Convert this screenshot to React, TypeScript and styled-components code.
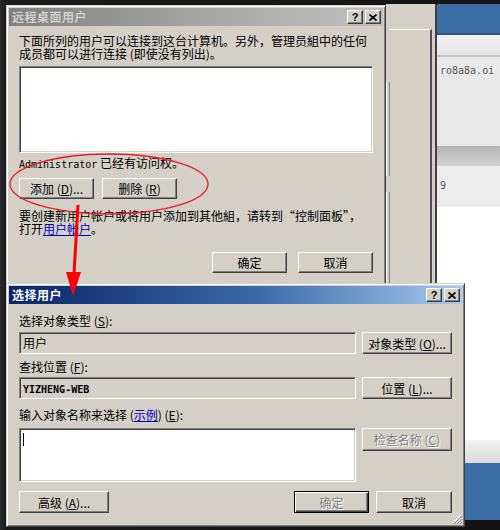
import React from 'react';
import styled, { createGlobalStyle, css } from 'styled-components';

const GlobalStyle = createGlobalStyle`
  html, body {
    margin: 0;
    padding: 0;
    background: #151515;
  }
  body {
    font-family: "Noto Sans CJK SC", "Liberation Sans", sans-serif;
    font-size: 12px;
    color: #000;
  }
`;

const face = '#d4d0c8';

const raised = css`
  border: 1px solid;
  border-color: #fff #404040 #404040 #fff;
  box-shadow: inset -1px -1px #808080;
`;

const sunken = css`
  border: 1px solid;
  border-color: #808080 #fff #fff #808080;
  box-shadow: inset 1px 1px #404040, inset -1px -1px ${face};
`;

const Desktop = styled.div`
  position: relative;
  width: 500px;
  height: 530px;
  overflow: hidden;
  background: linear-gradient(90deg, #2a2a2a 0px, #1a1a1a 6px, #141414 100%);
`;

const Window = styled.div<{ $left: number; $top: number; $width: number; $height: number }>`
  position: absolute;
  left: ${p => p.$left}px;
  top: ${p => p.$top}px;
  width: ${p => p.$width}px;
  height: ${p => p.$height}px;
  box-sizing: border-box;
  background: ${face};
  border: 1px solid;
  border-color: ${face} #404040 #404040 ${face};
  box-shadow: inset 1px 1px #fff, inset -1px -1px #808080;
  padding: 2px;
  display: flex;
  flex-direction: column;
`;

const TitleBar = styled.div<{ $active?: boolean }>`
  height: 18px;
  display: flex;
  align-items: center;
  padding: 0 2px 0 3px;
  background: ${p =>
    p.$active
      ? 'linear-gradient(90deg, #0a246a 0%, #3a6aa8 55%, #a6caf0 100%)'
      : 'linear-gradient(90deg, #808080 0%, #a8a8a8 55%, #c0c0c0 100%)'};
  color: ${p => (p.$active ? '#fff' : '#d4d0c8')};
`;

const TitleText = styled.span`
  flex: 1;
  font-weight: bold;
  font-size: 12px;
  line-height: 18px;
  letter-spacing: 0.5px;
`;

const CaptionButtons = styled.div`
  display: flex;
  gap: 2px;
`;

const CaptionButton = styled.div`
  ${raised};
  box-sizing: border-box;
  width: 16px;
  height: 14px;
  background: ${face};
  color: #000;
  display: flex;
  align-items: center;
  justify-content: center;
  font-family: "Liberation Sans", sans-serif;
  font-weight: bold;
  font-size: 11px;
  line-height: 1;
`;

const CloseGlyph = () => (
  <svg width="8" height="7" viewBox="0 0 8 7">
    <path d="M0.5 0.5 L7.5 6.5 M7.5 0.5 L0.5 6.5" stroke="#000" strokeWidth="1.6" />
  </svg>
);

const Caption = ({ title, active }: { title: string; active?: boolean }) => (
  <TitleBar $active={active}>
    <TitleText>{title}</TitleText>
    <CaptionButtons>
      <CaptionButton>?</CaptionButton>
      <CaptionButton>
        <CloseGlyph />
      </CaptionButton>
    </CaptionButtons>
  </TitleBar>
);

const Body = styled.div<{ $top: number }>`
  padding: ${p => p.$top}px 10px 0 10px;
  display: flex;
  flex-direction: column;
`;

const Text = styled.div<{ $mt?: number }>`
  line-height: 13px;
  margin-top: ${p => p.$mt ?? 0}px;
  white-space: nowrap;
`;

const Mono = styled.span`
  font-family: "DejaVu Sans Mono", "Liberation Mono", monospace;
  font-size: 10px;
`;

const Key = styled.span`
  text-decoration: underline;
`;

const Link = styled.span`
  color: #0000c0;
  text-decoration: underline;
`;

const ListBox = styled.div<{ $w: number; $h: number; $mt?: number; $grey?: boolean }>`
  ${sunken};
  box-sizing: border-box;
  width: ${p => p.$w}px;
  height: ${p => p.$h}px;
  margin-top: ${p => p.$mt ?? 0}px;
  background: ${p => (p.$grey ? face : '#fff')};
  padding: 3px 3px;
  line-height: 13px;
  flex-shrink: 0;
`;

const Caret = styled.div`
  width: 1px;
  height: 13px;
  background: #000;
  margin-top: 1px;
`;

const Button = styled.div<{ $w: number; $h?: number; $disabled?: boolean; $default?: boolean }>`
  ${raised};
  box-sizing: border-box;
  width: ${p => p.$w}px;
  height: ${p => p.$h ?? 21}px;
  background: ${face};
  display: flex;
  align-items: center;
  justify-content: center;
  white-space: nowrap;
  flex-shrink: 0;
  color: ${p => (p.$disabled ? '#808080' : '#000')};
  text-shadow: ${p => (p.$disabled ? '1px 1px #fff' : 'none')};
  ${p =>
    p.$default &&
    css`
      border: 1px solid #000;
      box-shadow: inset 1px 1px #fff, inset -1px -1px #404040, inset -2px -2px #808080;
    `}
`;

const Row = styled.div<{ $mt?: number; $gap: number }>`
  display: flex;
  gap: ${p => p.$gap}px;
  margin-top: ${p => p.$mt ?? 0}px;
`;

const RightRow = styled(Row)`
  justify-content: flex-end;
  width: 354px;
`;

const Spacer = styled.div`
  flex: 1;
`;

const Grip = styled.svg`
  position: absolute;
  right: 2px;
  bottom: 2px;
`;

/* background windows on the right */

const BackPanel = styled.div`
  position: absolute;
  left: 386px;
  top: 4px;
  width: 51px;
  height: 290px;
  box-sizing: border-box;
  background: ${face};
  border-right: 2px solid #404040;
  display: flex;
`;

const BackStrip = styled.div`
  width: 4px;
  margin-top: 78px;
  display: flex;
  flex-direction: column;
  gap: 16px;
`;

const StripPiece = styled.div<{ $h: number }>`
  height: ${p => p.$h}px;
  border-left: 1px solid #fff;
  border-right: 1px solid #808080;
`;

const BackFrame = styled.div`
  width: 40px;
  margin-top: 25px;
  border-top: 1px solid #fff;
  border-right: 2px solid #505050;
`;

const Browser = styled.div`
  position: absolute;
  left: 437px;
  top: 4px;
  width: 63px;
  height: 516px;
  display: flex;
  flex-direction: column;
  border-top-left-radius: 3px;
  overflow: hidden;
  background: #fff;
`;

const Band = styled.div<{ $h: number; $bg: string; $pt?: number }>`
  height: ${p => p.$h}px;
  box-sizing: border-box;
  flex-shrink: 0;
  background: ${p => p.$bg};
  color: #555;
  font-family: "DejaVu Sans Mono", "Liberation Mono", monospace;
  font-size: 10px;
  line-height: 12px;
  white-space: nowrap;
  padding: ${p => p.$pt ?? 0}px 0 0 3px;
`;

const Overlay = styled.svg`
  position: absolute;
  left: 0;
  top: 0;
  pointer-events: none;
`;

export default function App() {
  return (
    <>
      <GlobalStyle />
      <Desktop>
        <BackPanel>
          <BackStrip>
            <StripPiece $h={94} />
            <StripPiece $h={100} />
          </BackStrip>
          <BackFrame />
        </BackPanel>

        <Browser>
          <Band $h={29} $bg="#3b6ea5" />
          <Band $h={2} $bg="#2b5583" />
          <Band $h={20} $bg="linear-gradient(#f2f2f2, #e6e6e6)" />
          <Band $h={2} $bg="#c6c6c6" />
          <Band $h={89} $bg="#e9e9e9" $pt={8}>
            ro8a8a.oi
          </Band>
          <Band $h={20} $bg="linear-gradient(#b4b4b4, #d2d2d2)" />
          <Band $h={41} $bg="#ededed" $pt={14}>
            9
          </Band>
          <Band $h={233} $bg="#ffffff" />
          <Band $h={23} $bg="linear-gradient(#f2f2f2, #dadada)" />
          <Band $h={57} $bg="#3b6ea5" />
        </Browser>

        <Window $left={6} $top={5} $width={380} $height={300}>
          <Caption title="远程桌面用户" />
          <Body $top={8}>
            <Text>下面所列的用户可以连接到这台计算机。另外，管理员組中的任何</Text>
            <Text>成员都可以进行连接 (即使没有列出)。</Text>
            <ListBox $w={354} $h={87} $mt={6} />
            <Text $mt={3}>
              <Mono>Administrator</Mono> 已经有访问权。
            </Text>
            <Row $mt={7} $gap={8}>
              <Button $w={75}>
                添加 (<Key>D</Key>)...
              </Button>
              <Button $w={75}>
                删除 (<Key>R</Key>)
              </Button>
            </Row>
            <Text $mt={10}>要创建新用户帐户或将用户添加到其他組，请转到“控制面板”，</Text>
            <Text>
              打开<Link>用户帐户</Link>。
            </Text>
            <RightRow $mt={17} $gap={11}>
              <Button $w={75}>确定</Button>
              <Button $w={75}>取消</Button>
            </RightRow>
          </Body>
        </Window>

        <Window $left={6} $top={283} $width={459} $height={244}>
          <Caption title="选择用户" active />
          <Body $top={10}>
            <Text>
              选择对象类型 (<Key>S</Key>):
            </Text>
            <Row $mt={5} $gap={6}>
              <ListBox $w={337} $h={22} $grey>
                用户
              </ListBox>
              <Button $w={90} $h={22}>
                对象类型 (<Key>O</Key>)...
              </Button>
            </Row>
            <Text $mt={6}>
              查找位置 (<Key>F</Key>):
            </Text>
            <Row $mt={4} $gap={6}>
              <ListBox $w={337} $h={22} $grey>
                <Mono style={{ fontWeight: 'bold' }}>YIZHENG-WEB</Mono>
              </ListBox>
              <Button $w={90} $h={22}>
                位置 (<Key>L</Key>)...
              </Button>
            </Row>
            <Text $mt={9}>
              输入对象名称来选择 (<Link>示例</Link>) (<Key>E</Key>):
            </Text>
            <Row $mt={7} $gap={6}>
              <ListBox $w={337} $h={54}>
                <Caret />
              </ListBox>
              <Button $w={90} $h={23} $disabled>
                检查名称 (<Key>C</Key>)
              </Button>
            </Row>
            <Row $mt={9} $gap={7}>
              <Button $w={90} $h={22}>
                高级 (<Key>A</Key>)...
              </Button>
              <Spacer />
              <Button $w={75} $h={22} $disabled $default>
                确定
              </Button>
              <Button $w={76} $h={22}>
                取消
              </Button>
            </Row>
          </Body>
          <Grip width="10" height="10" viewBox="0 0 10 10">
            <path d="M9 1 L1 9 M9 4 L4 9 M9 7 L7 9" stroke="#fff" strokeWidth="1" />
            <path d="M10 2 L2 10 M10 5 L5 10 M10 8 L8 10" stroke="#808080" strokeWidth="1" />
          </Grip>
        </Window>

        <Overlay width="500" height="530" viewBox="0 0 500 530">
          <ellipse cx="109" cy="184" rx="99" ry="30" fill="none" stroke="#ee1c1c" strokeWidth="1.3" />
          <line x1="78" y1="205" x2="74" y2="274" stroke="#ff0000" strokeWidth="3" />
          <polygon points="66,272 81,272 73,296" fill="#ff0000" />
        </Overlay>
      </Desktop>
    </>
  );
}
